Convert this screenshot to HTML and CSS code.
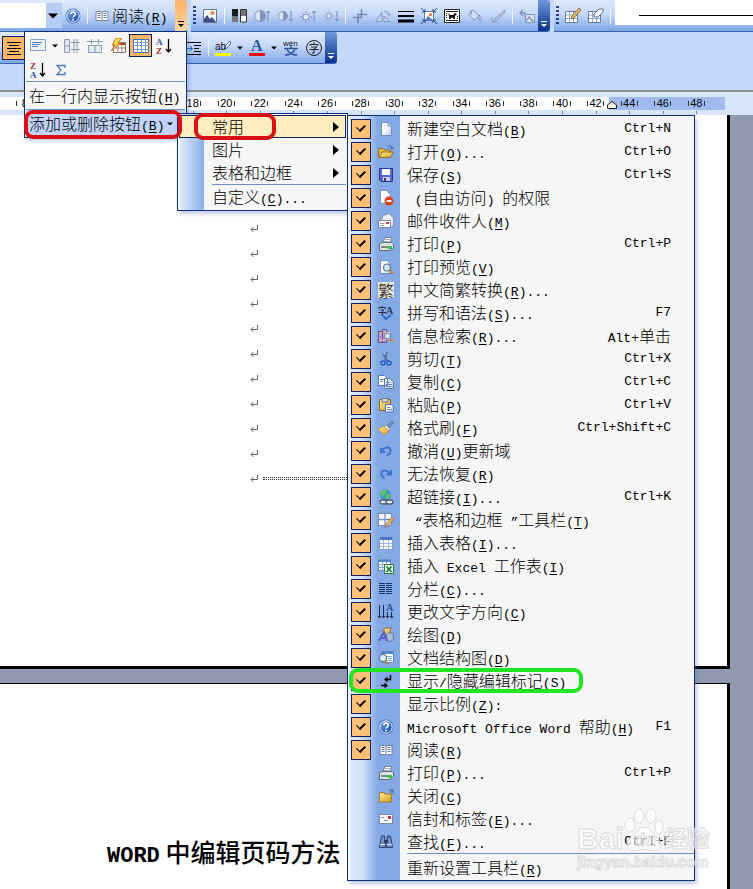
FILE: index.html
```html
<!DOCTYPE html>
<html lang="zh-CN">
<head>
    <meta charset="UTF-8">
    <meta name="viewport" content="width=device-width, initial-scale=1.0">
    <title>WORD 中编辑页码方法</title>
    <link rel="stylesheet" href="styles.css">
</head>
<body>
    <svg class="sprite" aria-hidden="true">
        <defs>
            <linearGradient id="g-blue" x1="0" y1="0" x2="1" y2="1"><stop offset="0" stop-color="#6fa8f0"/><stop offset="1" stop-color="#1444a8"/></linearGradient>
            <linearGradient id="g-page" x1="0" y1="0" x2="1" y2="1"><stop offset="0.4" stop-color="#fff"/><stop offset="1" stop-color="#b5cdf0"/></linearGradient>
            <linearGradient id="g-gold" x1="0" y1="0" x2="1" y2="1"><stop offset="0" stop-color="#fff0a0"/><stop offset="1" stop-color="#d99a20"/></linearGradient>
        </defs>
        <symbol id="i-help" viewBox="0 0 16 16"><circle cx="8" cy="8" r="7.5" fill="#3567bd"/><circle cx="8" cy="8" r="6.2" fill="url(#g-blue)" stroke="#fff"/><path d="M5.8 6.2C5.8 3.4 10.4 3.4 10.4 6.1C10.4 7.8 8.1 7.8 8.1 9.6M8.1 10.8V12.4" fill="none" stroke="#fff" stroke-width="1.6"/></symbol>
        <symbol id="i-book" viewBox="0 0 16 16"><path d="M2 3.5H7L8 4.5L9 3.5H14V12.5H9L8 13.5L7 12.5H2Z" fill="#fff" stroke="#71819f"/><path d="M8 4V13M3.5 5.5H6.5M3.5 7.5H6.5M3.5 9.5H6.5M9.5 5.5H12.5M9.5 7.5H12.5M9.5 9.5H12.5" stroke="#667796"/></symbol>
        <symbol id="i-picture" viewBox="0 0 16 16"><path d="M1.5 1.5H14.5V14.5H1.5Z" fill="#f4f7ff" stroke="#66748f"/><circle cx="10.5" cy="5" r="2" fill="#ee8739"/><path d="M2 11L5 7L8 11L10 9L14 14H2Z" fill="#394f86"/></symbol>
        <symbol id="i-color" viewBox="0 0 16 16"><path d="M1 1H7V14H1Z" fill="#1b1b1b"/><path d="M1 8H7V14H1Z" fill="#777"/><path d="M9.500 1.500H15.500V14H9.500Z" fill="#fff" stroke="#333"/><path d="M10 2H15V8H10Z" fill="#777"/></symbol>
        <symbol id="i-contrast-up" viewBox="0 0 16 16"><circle cx="6" cy="8" r="5.5" fill="#dbe5f6" stroke="#8494b6"/><path d="M6 2.500A5.500 5.500 0 0 1 6 13.500Z" fill="#8494b6"/><path d="M14 13V3M12 5L14 3L16 5" fill="none" stroke="#7488b2"/></symbol>
        <symbol id="i-contrast-down" viewBox="0 0 16 16"><circle cx="6" cy="8" r="4.500" fill="#dbe5f6" stroke="#8494b6"/><path d="M6 3.500A4.500 4.500 0 0 1 6 12.500Z" fill="#8494b6"/><path d="M14 3V13M12 11L14 13L16 11" fill="none" stroke="#7488b2"/></symbol>
        <symbol id="i-bright-up" viewBox="0 0 16 16"><circle cx="6" cy="9" r="3" fill="#e1eafa" stroke="#8494b6"/><path d="M6 3V5M6 13V15M0 9H2M10 9H12M2 5L3.500 6.500M8.500 11.500L10 13M10 5L8.500 6.500M2 13L3.500 11.500" stroke="#8494b6"/><path d="M14 13V3M12 5L14 3L16 5" fill="none" stroke="#7488b2"/></symbol>
        <symbol id="i-bright-down" viewBox="0 0 16 16"><circle cx="6" cy="8" r="2.500" fill="#e1eafa" stroke="#8494b6"/><path d="M6 3V4M6 12V13M1 8H2M10 8H11M3 5H4M8 5H9M3 11H4M8 11H9" stroke="#8494b6"/><path d="M14 3V13M12 11L14 13L16 11" fill="none" stroke="#7488b2"/></symbol>
        <symbol id="i-crop" viewBox="0 0 16 16"><path d="M1 9.500H9.500V1M6 15V6.500H15" fill="none" stroke="#7488b2" stroke-width="1.500"/></symbol>
        <symbol id="i-rotate" viewBox="0 0 16 16"><path d="M1 13.500H7V4.500ZM9 13.500H15L9 8Z" fill="#c9d8f3" stroke="#8196c1"/><path d="M9 3.500C13 3 14 5 14 7M12 5.500L14 7.500L16 5.500" fill="none" stroke="#8196c1"/></symbol>
        <symbol id="i-lines" viewBox="0 0 16 16"><path d="M0 3.500H16" stroke="#000"/><path d="M0 8H16" stroke="#000" stroke-width="2"/><path d="M0 13H16" stroke="#000" stroke-width="3"/></symbol>
        <symbol id="i-compress" viewBox="0 0 16 16"><path d="M3.500 3.500H12.500V12.500H3.500Z" fill="#fff" stroke="#68799b"/><circle cx="9.500" cy="6.500" r="1.500" fill="#e96a2c"/><path d="M4 12L7 8L12 12Z" fill="#587dc0"/><path d="M0 0L4 4M1 4H4V1M16 0L12 4M12 1V4H15M0 16L4 12M1 12H4V15M16 16L12 12M12 15V12H15" fill="none" stroke="#1d4795"/></symbol>
        <symbol id="i-wrap" viewBox="0 0 16 16"><path d="M.5 1.500H15.500V14.500H.5Z" fill="#fff" stroke="#222"/><path d="M2 3.500H14M2 12.500H14M2 5.500H3M2 7.500H3M2 9.500H3M13 8.500H14M13 10.500H14" stroke="#222"/><path d="M4 5L6 7H9L11 5L13 6L11 8V11H10L8 9.500L6 11H5L5 8Z" fill="#111"/></symbol>
        <symbol id="i-fill" viewBox="0 0 16 16"><path d="M1.500 6L6.500 2L12 8L7 12ZM4 2V7M12 7C14 9 15 11 14 13C12 13 12 10 12 8" fill="#d3dff4" stroke="#8295bc"/></symbol>
        <symbol id="i-pen" viewBox="0 0 16 16"><path d="M14.500 2L5 11L3 14L7 12L15 4ZM2 9V14H7" fill="#c3d2ee" stroke="#8295bc"/></symbol>
        <symbol id="i-reset" viewBox="0 0 16 16"><path d="M6.500 6.500H15.500V14.500H6.500Z" fill="#dbe5f6" stroke="#8295bc"/><path d="M7 13L10 9L12 11L14 14M6 9V5H1M4 2L1 5L4 8" fill="none" stroke="#8295bc" stroke-width="1.400"/></symbol>
        <symbol id="i-table" viewBox="0 0 16 16"><path d="M1.500 2.500H14.500V14.500H1.500Z" fill="#fff" stroke="#7f9ccc"/><path d="M2 2H14V5H2Z" fill="#4c79c5"/><path d="M2 8.500H14M2 11.500H14M5.500 5V14M10.500 5V14" stroke="#9bb5df"/></symbol>
        <symbol id="i-table-pen" viewBox="0 0 16 16"><path d="M.5 3.500H12.500V14.500H.5Z" fill="#fff" stroke="#657da6"/><path d="M1 7H12M1 10.500H12M4.500 4V14M8.500 4V14" stroke="#8ea9d6"/><path d="M14 0L16 2L9 10L6 11L7 8Z" fill="#edbf68" stroke="#70532b" stroke-width=".8"/></symbol>
        <symbol id="i-table-erase" viewBox="0 0 16 16"><path d="M.5 3.500H12.500V14.500H.5Z" fill="#fff" stroke="#657da6"/><path d="M1 7H12M1 10.500H12M4.500 4V14M8.500 4V14" stroke="#8ea9d6"/><path d="M11 1H15V4L10 9H6V6Z" fill="#f3f4fb" stroke="#69779a"/></symbol>
        <symbol id="i-center" viewBox="0 0 16 16"><path d="M1 2.500H15M3 5.500H13M1 8.500H15M3 11.500H13M1 14.500H15" stroke="#000"/></symbol>
        <symbol id="i-indent" viewBox="0 0 16 16"><path d="M1 2.500H15M8 5.500H15M8 8.500H13M8 11.500H15M1 14.500H15" stroke="#000"/><path d="M1 8.500H6M4 6L6.500 8.500L4 11" fill="none" stroke="#1c57b5"/></symbol>
        <symbol id="i-circle-char" viewBox="0 0 16 16"><circle cx="8" cy="8" r="7.500" fill="none" stroke="#222"/><path d="M8 2V4M4 6V4.500H12V6M5 7H11L8 9V13H6M3.500 9.500H12.500" fill="none" stroke="#222"/></symbol>
        <symbol id="i-align" viewBox="0 0 16 16"><path d="M.5 1.500H15.500V12.500H.5Z" fill="#edf2fb" stroke="#879fc8"/><path d="M2 4.500H12M2 6.500H10M2 8.500H8" stroke="#5b7fb9"/></symbol>
        <symbol id="i-rows" viewBox="0 0 16 16"><path d="M.5 1.500H5.500V14.500H.5ZM.5 8H5.500M10 1V15M13 1V15M7 4.500H16M7 11.500H16" fill="#e3e8f2" stroke="#8d99ae"/></symbol>
        <symbol id="i-cols" viewBox="0 0 16 16"><path d="M1.500 7.500H14.500V14.500H1.500ZM8 7V15M0 3.500H16M4.500 1V6M11.500 1V6" fill="#e3e8f2" stroke="#8d99ae"/></symbol>
        <symbol id="i-autofmt" viewBox="0 0 16 16"><path d="M3.500 4.500H15.500V14.500H3.500Z" fill="#fff" stroke="#8b7260"/><path d="M4 5H15V7H4Z" fill="#b64936"/><path d="M4 10H15M8 7V14M12 7V14" stroke="#9c887a"/><path d="M6 0H12L8 5H11L1 13L5 7H2Z" fill="#ffd04b" stroke="#b66616" stroke-width=".8"/></symbol>
        <symbol id="i-grid" viewBox="0 0 16 16"><path d="M.5 1.500H15.500V14.500H.5Z" fill="#fff" stroke="#3e69ad"/><path d="M0 4.500H16M0 7.500H16M0 11.500H16M4.500 1V15M8.500 1V15M12.500 1V15" stroke="#7497cd"/></symbol>
        <symbol id="i-sum" viewBox="0 0 16 16"><path d="M12 6V3.500H4L8 8L4 12.500H12V10" fill="none" stroke="#5179b5" stroke-width="1.300"/></symbol>
        <symbol id="i-new" viewBox="0 0 16 16"><path d="M3.500 1.500H10L13.500 5V14.500H3.500Z" fill="url(#g-page)" stroke="#6f8cba"/><path d="M10 1.500V5H13.500" fill="#cbdcf5" stroke="#6f8cba"/></symbol>
        <symbol id="i-open" viewBox="0 0 16 16"><path d="M.5 13.500V4.500H5L6.500 6H12.500V8" fill="#e7b94d" stroke="#976f21"/><path d="M1 13.500L4 8H15.500L12.500 13.500Z" fill="url(#g-gold)" stroke="#976f21"/><path d="M9 3C11 1 13 1 14 4M12 3.500L14 5L15.500 3" fill="none" stroke="#2c63a7"/></symbol>
        <symbol id="i-save" viewBox="0 0 16 16"><path d="M1.500 1.500H14.500V14.500H3L1.500 13Z" fill="#5868ce" stroke="#30358c"/><path d="M4 2H12V8H4Z" fill="#f5f8ff"/><path d="M5 10H12V14H5Z" fill="#cad3ed"/><path d="M6 11H8V14H6Z" fill="#30358c"/></symbol>
        <symbol id="i-rights" viewBox="0 0 16 16"><path d="M2.500 .5H8.500L12.500 4.500V13.500H2.500Z" fill="url(#g-page)" stroke="#7c94ba"/><circle cx="11" cy="11" r="4.500" fill="#d9441e"/><path d="M8.500 11H13.500" stroke="#fff" stroke-width="2"/></symbol>
        <symbol id="i-mail" viewBox="0 0 16 16"><path d="M3.500 6.500L5 2.500L11 .5L15.500 5V13.500H3.500Z" fill="#e9eef8" stroke="#8290aa"/><path d="M.5 7.500H12.500V14.500H.5Z" fill="#fff" stroke="#7788a9"/><path d="M8 9H11V11H8Z" fill="#d73838"/><path d="M2 10.500H6M2 12.500H6" stroke="#899ab8"/></symbol>
        <symbol id="i-print" viewBox="0 0 16 16"><path d="M4.500 7L7 1.500H14L11.500 7" fill="#fff" stroke="#758091"/><path d="M7 3.500H12M6 5.500H11" stroke="#9cacbf"/><path d="M1.500 8L4 6.500H14L15.500 8V12L12 14.500H1.500Z" fill="#dce5e3" stroke="#64716d"/><path d="M3 10H10V12H3Z" fill="#7b898b"/><path d="M10 10H14V13H10Z" fill="#28ca43"/></symbol>
        <symbol id="i-preview" viewBox="0 0 16 16"><path d="M2.500 1.500H9L12.500 5V14.500H2.500Z" fill="url(#g-page)" stroke="#758cb3"/><circle cx="9" cy="8.500" r="3.500" fill="#cce8ff" stroke="#67758e" stroke-width="1.200"/><path d="M11.500 11L15 15" stroke="#bf7d2d" stroke-width="2"/></symbol>
        <symbol id="i-research" viewBox="0 0 16 16"><path d="M.5 3.500H4.500V14.500H.5ZM4.500 1.500H8.500V14.500H4.500Z" fill="#b794d5" stroke="#69549c"/><path d="M1 5H4M5 4H8M1 12H8" stroke="#f0cc70"/><path d="M8.500 3.500H12.500V12H8.500Z" fill="#fff" stroke="#7884a8"/><circle cx="9.500" cy="8" r="3" fill="#d9f0ff" stroke="#69789a"/><path d="M12 11L15 14" stroke="#d28a2b" stroke-width="2"/></symbol>
        <symbol id="i-cut" viewBox="0 0 16 16"><path d="M9 1L7 10M5 3L10 11" stroke="#526a91" stroke-width="1.500"/><circle cx="5" cy="12" r="2" fill="none" stroke="#245cbd" stroke-width="1.500"/><circle cx="11" cy="12" r="2" fill="none" stroke="#245cbd" stroke-width="1.500"/></symbol>
        <symbol id="i-copy" viewBox="0 0 16 16"><path d="M.5 1.500H6.500L9.500 4.500V11.500H.5ZM6.500 4.500H12L15.500 8V14.500H6.500Z" fill="url(#g-page)" stroke="#567ab4"/><path d="M2 5.500H6M2 7.500H5M8 8.500H12M8 10.500H14M8 12.500H13" stroke="#6688bd"/></symbol>
        <symbol id="i-paste" viewBox="0 0 16 16"><path d="M1.500 2.500H12.500V13.500H1.500Z" fill="url(#g-gold)" stroke="#8f691c"/><path d="M4 1.500H10V5H4Z" fill="#d9dce5" stroke="#69708a"/><path d="M7.500 7.500H13L15.500 10V15H7.500Z" fill="url(#g-page)" stroke="#5876a7"/><path d="M9 10.500H12M9 12.500H14" stroke="#6f8abb"/></symbol>
        <symbol id="i-brush" viewBox="0 0 16 16"><path d="M14 1L15.500 3L11 8L9 6Z" fill="#7493bb" stroke="#526681" stroke-width=".7"/><path d="M8 5L12 9L10 11L6 7Z" fill="#eef1f7" stroke="#72829a" stroke-width=".7"/><path d="M6 6L11 11L6 15L0 9Z" fill="url(#g-gold)" stroke="#ad8238" stroke-width=".7"/></symbol>
        <symbol id="i-undo" viewBox="0 0 16 16"><path d="M3 5V9H7M3 8.500C6 4 12 3 12.500 7C13 10 10 12 8.500 13" fill="none" stroke="#3e72d2" stroke-width="2"/></symbol>
        <symbol id="i-redo" viewBox="0 0 16 16"><path d="M13 4V8.500H8.500M13 8C9 4 4 3 3.500 7C3 10 5 11 6.500 12" fill="none" stroke="#3e72d2" stroke-width="2"/></symbol>
        <symbol id="i-link" viewBox="0 0 16 16"><circle cx="7.500" cy="6" r="5.500" fill="#4092c5"/><path d="M3 3C6 0 8 1 9 3L7 6L3 7ZM9 5L13 6L10 10L7 9Z" fill="#60c45d"/><rect x="2" y="11" width="7" height="4" rx="2" fill="#dbe5f6" stroke="#4d596e" stroke-width="1.300"/><rect x="8" y="11" width="7" height="4" rx="2" fill="#dbe5f6" stroke="#4d596e" stroke-width="1.300"/></symbol>
        <symbol id="i-borders" viewBox="0 0 16 16"><path d="M.5 1.500H13.500V13.500H.5Z" fill="#fff" stroke="#6d89b5"/><path d="M0 7.500H14M7 1V14" stroke="#7393c7" stroke-width="1.300"/><path d="M14 5L16 7L10 14L7 15L8 12Z" fill="#efb866" stroke="#80562d" stroke-width=".7"/></symbol>
        <symbol id="i-excel" viewBox="0 0 16 16"><path d="M.5 1.500H12.500V12.500H.5Z" fill="#fff" stroke="#6e8fbd"/><path d="M0 2H13V4H0Z" fill="#5584c8"/><path d="M1 6.500H12M1 9.500H12M4.500 4V12M8.500 4V12" stroke="#8cabd7"/><path d="M6.500 6.500H15.500V15.500H6.500Z" fill="#eaf6e9" stroke="#2b7937"/><path d="M8.500 8.500L13.500 14M13.500 8.500L8.500 14" stroke="#217333" stroke-width="1.700"/></symbol>
        <symbol id="i-columns" viewBox="0 0 16 16"><path d="M1 2.500H7M1 4.500H7M1 6.500H7M1 8.500H7M1 10.500H7M1 12.500H7M8 2.500H14M8 4.500H14M8 6.500H14M8 8.500H14M8 10.500H14M8 12.500H14" stroke="#172f68"/></symbol>
        <symbol id="i-draw" viewBox="0 0 16 16"><path d="M5 2.500L8 1H14L12 3V8H5Z" fill="url(#g-gold)" stroke="#947346"/><path d="M8.500 8C8.500 5 15.500 5 15.500 8V12C15.500 15 8.500 15 8.500 12Z" fill="#a9bbd9" stroke="#647798"/><path d="M1 14L6 5L9 14M3 11H8" fill="none" stroke="#5962ca" stroke-width="2"/></symbol>
        <symbol id="i-docmap" viewBox="0 0 16 16"><path d="M3.500 1.500H15.500V12.500H3.500Z" fill="#fff" stroke="#6083bd"/><path d="M4 2H15V4H4Z" fill="#4f81cd"/><path d="M9 6.500H14M10 8.500H14M9 10.500H14" stroke="#819fc9"/><circle cx="5" cy="8" r="3.500" fill="#dceefa" stroke="#5f7b8c" stroke-width="1.200"/><path d="M7.500 11L10 14.500" stroke="#c3842c" stroke-width="2"/></symbol>
        <symbol id="i-marks" viewBox="0 0 16 16"><path d="M12.500 2V6.500H8M3 12.500H8" fill="none" stroke="#000" stroke-width="1.400"/><path d="M6 6.500L9.500 3.500V9.500ZM10 12.500L6.500 9.500V15.500Z" fill="#000"/></symbol>
        <symbol id="i-close" viewBox="0 0 16 16"><path d="M1.500 4.500H6L7 6H13.500V14H1.500Z" fill="url(#g-gold)" stroke="#a8772a"/><path d="M15 6V2H11M15 2L12 5" fill="none" stroke="#536789"/></symbol>
        <symbol id="i-envelope" viewBox="0 0 16 16"><path d="M1.500 3.500H14.500V12.500H1.500Z" fill="#fff" stroke="#7a8aab"/><path d="M10 5H13V8H10Z" fill="#cf3838"/><path d="M3 6.500H6M6 9.500H10" stroke="#7787a5"/></symbol>
        <symbol id="i-find" viewBox="0 0 16 16"><path d="M3.500 2H6.500L7.500 13.500H1.500ZM9.500 2H12.500L14.500 13.500H8.500Z" fill="#6f91c4" stroke="#2b426e"/><path d="M6 6H10V9H6Z" fill="#2b426e"/><path d="M2 10.500H7M9 10.500H14" stroke="#e3ecfa"/></symbol>
        <symbol id="i-return" viewBox="0 0 8 8"><path d="M7.500 0V4.500H1M3.500 2L1 4.500L3.500 7" fill="none" stroke="#666"/></symbol>
        <symbol id="i-down" viewBox="0 0 8 8"><path d="M0 2H8L4 6Z" fill="#000"/></symbol>
        <symbol id="i-right" viewBox="0 0 8 10"><path d="M1 0V10L7 5Z" fill="#000"/></symbol>
        <symbol id="i-more" viewBox="0 0 8 8"><path d="M1 1.500H7" stroke="currentColor"/><path d="M1 4H7L4 7Z" fill="currentColor"/></symbol>
    </svg>

    <header class="toolbars">
        <div class="bar-row">
            <div class="bar standard">
                <div class="combo">
                    <select aria-label="显示比例"><option></option></select>
                    <svg class="caret"><use href="#i-down"/></svg>
                </div>
                <button class="tool" aria-label="帮助"><svg><use href="#i-help"/></svg></button>
                <span class="sep"></span>
                <button class="tool read"><svg><use href="#i-book"/></svg><span>阅读<span class="en">(<u>R</u>)</span></span></button>
                <button class="more hot" aria-label="工具栏选项"><svg><use href="#i-more"/></svg></button>
            </div>
            <div class="bar pictures">
                <span class="grip"></span>
                <button class="tool" aria-label="插入图片"><svg><use href="#i-picture"/></svg></button>
                <span class="sep"></span>
                <button class="tool" aria-label="颜色"><svg><use href="#i-color"/></svg></button>
                <button class="tool" aria-label="增加对比度"><svg><use href="#i-contrast-up"/></svg></button>
                <button class="tool" aria-label="降低对比度"><svg><use href="#i-contrast-down"/></svg></button>
                <button class="tool" aria-label="增加亮度"><svg><use href="#i-bright-up"/></svg></button>
                <button class="tool" aria-label="降低亮度"><svg><use href="#i-bright-down"/></svg></button>
                <span class="sep"></span>
                <button class="tool" aria-label="裁剪"><svg><use href="#i-crop"/></svg></button>
                <button class="tool" aria-label="向左旋转"><svg><use href="#i-rotate"/></svg></button>
                <button class="tool" aria-label="线型"><svg><use href="#i-lines"/></svg></button>
                <button class="tool" aria-label="压缩图片"><svg><use href="#i-compress"/></svg></button>
                <button class="tool" aria-label="文字环绕"><svg><use href="#i-wrap"/></svg></button>
                <button class="tool" aria-label="设置图片格式"><svg><use href="#i-fill"/></svg></button>
                <button class="tool" aria-label="设置透明色"><svg><use href="#i-pen"/></svg></button>
                <span class="sep"></span>
                <button class="tool" aria-label="重设图片"><svg><use href="#i-reset"/></svg></button>
                <button class="more" aria-label="工具栏选项"><svg><use href="#i-more"/></svg></button>
            </div>
            <div class="bar tables">
                <span class="grip"></span>
                <button class="tool" aria-label="绘制表格"><svg><use href="#i-table-pen"/></svg></button>
                <button class="tool" aria-label="擦除"><svg><use href="#i-table-erase"/></svg></button>
                <span class="sep"></span>
                <div class="line-style">
                    <select aria-label="线型"><option></option></select>
                    <span class="line"></span>
                </div>
            </div>
        </div>
        <div class="bar-row">
            <div class="bar format">
                <button class="tool on" aria-label="居中"><svg><use href="#i-center"/></svg></button>
                <button class="tool indent" aria-label="增加缩进量"><svg><use href="#i-indent"/></svg></button>
                <span class="sep"></span>
                <button class="tool" aria-label="突出显示"><svg viewBox="0 0 16 16"><path d="M0 13H16V16H0Z" fill="#f7f700"/><path d="M15 1L10 6L9 9L12 8L16 3Z" fill="#fff" stroke="#4b679b"/><text x="0" y="10" font-size="10" class="glyph">ab</text></svg></button>
                <button class="drop" aria-label="突出显示颜色"><svg><use href="#i-down"/></svg></button>
                <button class="tool" aria-label="字体颜色"><svg viewBox="0 0 16 16"><path d="M0 13H16V16H0Z" fill="#e01010"/><text x="2" y="11" font-size="16" class="glyph-a">A</text></svg></button>
                <button class="drop" aria-label="选择字体颜色"><svg><use href="#i-down"/></svg></button>
                <button class="tool" aria-label="拼音指南"><svg viewBox="0 0 16 16"><text x="0" y="6" font-size="8" class="glyph">wén</text><path d="M1 8.500H15M8 6V8M4 9C5 13 10 15 14 15M12 9C11 13 6 15 2 15" fill="none" stroke="#3454a0" stroke-width="1.500"/></svg></button>
                <button class="tool" aria-label="带圈字符"><svg><use href="#i-circle-char"/></svg></button>
                <button class="more" aria-label="工具栏选项"><svg><use href="#i-more"/></svg></button>
            </div>
        </div>
    </header>

    <div class="ruler">
        <div class="scale">
            <span>8</span><span>10</span><span>12</span><span>14</span><span>16</span><span>18</span><span>20</span><span>22</span><span>24</span><span>26</span><span>28</span><span>30</span><span>32</span><span>34</span><span>36</span><span>38</span><span>40</span><span>42</span><span>44</span><span>46</span><span>48</span>
        </div>
        <svg class="margin-mark" viewBox="0 0 10 8"><path d="M.5 7.500V4L5 .5L9.500 4V7.500Z" fill="#f3ecdc" stroke="#222"/></svg>
    </div>

    <main class="document">
        <section class="page first">
            <p><svg><use href="#i-return"/></svg></p>
            <p><svg><use href="#i-return"/></svg></p>
            <p><svg><use href="#i-return"/></svg></p>
            <p><svg><use href="#i-return"/></svg></p>
            <p><svg><use href="#i-return"/></svg></p>
            <p><svg><use href="#i-return"/></svg></p>
            <p><svg><use href="#i-return"/></svg></p>
            <p><svg><use href="#i-return"/></svg></p>
            <p><svg><use href="#i-return"/></svg></p>
            <p><svg><use href="#i-return"/></svg></p>
            <p><svg><use href="#i-return"/></svg><span class="break"></span></p>
        </section>
        <section class="page second">
            <h1><span class="word">WORD</span> 中编辑页码方法</h1>
        </section>
    </main>

    <!-- toolbar options -->
    <div class="popup options">
        <div class="extra">
            <button class="tool" aria-label="对齐方式"><svg><use href="#i-align"/></svg></button>
            <button class="drop" aria-label="选择对齐方式"><svg><use href="#i-down"/></svg></button>
            <button class="tool" aria-label="平均分布各行"><svg><use href="#i-rows"/></svg></button>
            <button class="tool" aria-label="平均分布各列"><svg><use href="#i-cols"/></svg></button>
            <button class="tool" aria-label="自动套用格式"><svg><use href="#i-autofmt"/></svg></button>
            <button class="tool on" aria-label="显示虚框"><svg><use href="#i-grid"/></svg></button>
            <button class="tool" aria-label="升序排序"><svg viewBox="0 0 16 16"><text x="0" y="7" font-size="9" fill="#2b549c" class="glyph-s">A</text><text x="0" y="16" font-size="9" fill="#a03030" class="glyph-s">Z</text><path d="M12.500 1V14M10 11L12.500 14L15 11" fill="none" stroke="#000" stroke-width="1.300"/></svg></button>
            <button class="tool" aria-label="降序排序"><svg viewBox="0 0 16 16"><text x="0" y="7" font-size="9" fill="#a03030" class="glyph-s">Z</text><text x="0" y="16" font-size="9" fill="#2b549c" class="glyph-s">A</text><path d="M12.500 1V14M10 11L12.500 14L15 11" fill="none" stroke="#000" stroke-width="1.300"/></svg></button>
            <button class="tool" aria-label="自动求和"><svg><use href="#i-sum"/></svg></button>
        </div>
        <button class="option"><span>在一行内显示按钮<span class="en">(<u>H</u>)</span></span></button>
        <button class="option open"><span>添加或删除按钮<span class="en">(<u>B</u>)</span></span><svg><use href="#i-down"/></svg></button>
    </div>

    <!-- add or remove buttons -->
    <div class="popup submenu">
        <button class="sub hover">常用<svg><use href="#i-right"/></svg></button>
        <button class="sub">图片<svg><use href="#i-right"/></svg></button>
        <button class="sub">表格和边框<svg><use href="#i-right"/></svg></button>
        <hr>
        <button class="sub"><span>自定义<span class="en">(<u>C</u>)...</span></span></button>
    </div>

    <!-- button list -->
    <div class="popup list">
        <label class="item"><input type="checkbox" checked><svg><use href="#i-new"/></svg><span>新建空白文档<span class="en">(<u>B</u>)</span></span><kbd>Ctrl+N</kbd></label>
        <label class="item"><input type="checkbox" checked><svg><use href="#i-open"/></svg><span>打开<span class="en">(<u>O</u>)...</span></span><kbd>Ctrl+O</kbd></label>
        <label class="item"><input type="checkbox" checked><svg><use href="#i-save"/></svg><span>保存<span class="en">(<u>S</u>)</span></span><kbd>Ctrl+S</kbd></label>
        <label class="item"><input type="checkbox" checked><svg><use href="#i-rights"/></svg><span><span class="en"> (</span>自由访问<span class="en">) </span>的权限</span></label>
        <label class="item"><input type="checkbox" checked><svg><use href="#i-mail"/></svg><span>邮件收件人<span class="en">(<u>M</u>)</span></span></label>
        <label class="item"><input type="checkbox" checked><svg><use href="#i-print"/></svg><span>打印<span class="en">(<u>P</u>)</span></span><kbd>Ctrl+P</kbd></label>
        <label class="item"><input type="checkbox" checked><svg><use href="#i-preview"/></svg><span>打印预览<span class="en">(<u>V</u>)</span></span></label>
        <label class="item"><input type="checkbox" checked><span class="char">繁</span><span>中文简繁转换<span class="en">(<u>R</u>)...</span></span></label>
        <label class="item"><input type="checkbox" checked><svg viewBox="0 0 16 16"><text x="8" y="9" font-size="10" fill="#253c67" class="glyph-s">A</text><path d="M4 1V2M1 4V2.500H7.500V4M2.500 5H6L4.500 6.500V10H3M.5 7.500H8" fill="none" stroke="#1c2948"/><path d="M5 11L8 14L13 10" fill="none" stroke="#2869c8" stroke-width="2"/></svg><span>拼写和语法<span class="en">(<u>S</u>)...</span></span><kbd>F7</kbd></label>
        <label class="item"><input type="checkbox" checked><svg><use href="#i-research"/></svg><span>信息检索<span class="en">(<u>R</u>)...</span></span><kbd>Alt+<span class="cn">单击</span></kbd></label>
        <label class="item"><input type="checkbox" checked><svg><use href="#i-cut"/></svg><span>剪切<span class="en">(<u>T</u>)</span></span><kbd>Ctrl+X</kbd></label>
        <label class="item"><input type="checkbox" checked><svg><use href="#i-copy"/></svg><span>复制<span class="en">(<u>C</u>)</span></span><kbd>Ctrl+C</kbd></label>
        <label class="item"><input type="checkbox" checked><svg><use href="#i-paste"/></svg><span>粘贴<span class="en">(<u>P</u>)</span></span><kbd>Ctrl+V</kbd></label>
        <label class="item"><input type="checkbox" checked><svg><use href="#i-brush"/></svg><span>格式刷<span class="en">(<u>F</u>)</span></span><kbd>Ctrl+Shift+C</kbd></label>
        <label class="item"><input type="checkbox" checked><svg><use href="#i-undo"/></svg><span>撤消<span class="en">(<u>U</u>)</span>更新域</span></label>
        <label class="item"><input type="checkbox" checked><svg><use href="#i-redo"/></svg><span>无法恢复<span class="en">(<u>R</u>)</span></span></label>
        <label class="item"><input type="checkbox" checked><svg><use href="#i-link"/></svg><span>超链接<span class="en">(<u>I</u>)...</span></span><kbd>Ctrl+K</kbd></label>
        <label class="item"><input type="checkbox" checked><svg><use href="#i-borders"/></svg><span><span class="en"> “</span>表格和边框<span class="en"> ”</span>工具栏<span class="en">(<u>T</u>)</span></span></label>
        <label class="item"><input type="checkbox" checked><svg><use href="#i-table"/></svg><span>插入表格<span class="en">(<u>I</u>)...</span></span></label>
        <label class="item"><input type="checkbox" checked><svg><use href="#i-excel"/></svg><span>插入<span class="en"> Excel </span>工作表<span class="en">(<u>I</u>)</span></span></label>
        <label class="item"><input type="checkbox" checked><svg><use href="#i-columns"/></svg><span>分栏<span class="en">(<u>C</u>)...</span></span></label>
        <label class="item"><input type="checkbox" checked><svg viewBox="0 0 16 16"><path d="M1.500 1V14M5.500 1V14M9.500 8V14M13.500 8V14M0 12L1.500 14L3 12M4 12L5.500 14L7 12M8 12L9.500 14L11 12M12 12L13.500 14L15 12" fill="none" stroke="#1c2f59"/><text x="8" y="7" font-size="10" fill="#234f9b" class="glyph-s">A</text></svg><span>更改文字方向<span class="en">(<u>C</u>)</span></span></label>
        <label class="item"><input type="checkbox" checked><svg><use href="#i-draw"/></svg><span>绘图<span class="en">(<u>D</u>)</span></span></label>
        <label class="item"><input type="checkbox" checked><svg><use href="#i-docmap"/></svg><span>文档结构图<span class="en">(<u>D</u>)</span></span></label>
        <label class="item"><input type="checkbox" checked><svg><use href="#i-marks"/></svg><span>显示<span class="en">/</span>隐藏编辑标记<span class="en">(<u>S</u>)</span></span></label>
        <label class="item"><input type="checkbox" checked><span></span><span>显示比例<span class="en">(<u>Z</u>):</span></span></label>
        <label class="item"><input type="checkbox" checked><svg><use href="#i-help"/></svg><span><span class="en">Microsoft Office Word </span>帮助<span class="en">(<u>H</u>)</span></span><kbd>F1</kbd></label>
        <label class="item"><input type="checkbox" checked><svg><use href="#i-book"/></svg><span>阅读<span class="en">(<u>R</u>)</span></span></label>
        <button class="item"><span></span><svg><use href="#i-print"/></svg><span>打印<span class="en">(<u>P</u>)...</span></span><kbd>Ctrl+P</kbd></button>
        <button class="item"><span></span><svg><use href="#i-close"/></svg><span>关闭<span class="en">(<u>C</u>)</span></span></button>
        <button class="item"><span></span><svg><use href="#i-envelope"/></svg><span>信封和标签<span class="en">(<u>E</u>)...</span></span></button>
        <button class="item"><span></span><svg><use href="#i-find"/></svg><span>查找<span class="en">(<u>F</u>)...</span></span><kbd>Ctrl+F</kbd></button>
        <hr>
        <button class="item"><span></span><span></span><span>重新设置工具栏<span class="en">(<u>R</u>)</span></span></button>
    </div>

    <div class="ring ring-add"></div>
    <div class="ring ring-common"></div>
    <div class="ring ring-marks"></div>

    <div class="watermark">
        <div class="brand">
            <span class="bai">Bai</span>
            <svg viewBox="0 0 40 44"><g fill="#fff" stroke="#cfcfcf"><ellipse cx="6" cy="17" rx="5" ry="7"/><ellipse cx="15" cy="8" rx="5" ry="7"/><ellipse cx="27" cy="8" rx="5" ry="7"/><ellipse cx="35" cy="19" rx="4" ry="7"/><path d="M20 19C26 19 28 26 34 30C40 36 36 43 29 43C24 43 24 41 20 41C16 41 14 43 10 43C3 43 0 36 6 30C12 26 14 19 20 19Z"/></g><text x="10" y="38" font-size="18" class="du">du</text></svg>
            <span class="exp">经验</span>
        </div>
        <div class="site">jingyan.baidu.com</div>
    </div>
</body>
</html>
```
FILE: styles.css
```css
*{box-sizing:border-box;}
body{margin:0;min-height:100vh;display:flex;flex-direction:column;position:relative;overflow:hidden;background-color:#c3d7f9;color:#000;font-family:"Noto Sans CJK SC",sans-serif;font-size:16px;font-weight:300;line-height:23px;}
button,select,label,input{font:inherit;color:inherit;margin:0;}
button{border:0;padding:0;background:none;}
.sprite{position:absolute;width:0;height:0;}
svg{display:block;width:16px;height:16px;flex:none;}
.en,kbd{font-family:"Liberation Mono",monospace;font-size:13px;line-height:1;white-space:pre;}
.cn{font-family:"Noto Sans CJK SC",sans-serif;font-size:16px;}
.glyph{font-family:"Liberation Sans",sans-serif;fill:#111;}
.glyph-s{font-family:"Liberation Serif",serif;font-weight:bold;}
.glyph-a{font-family:"Liberation Serif",serif;font-weight:bold;fill:#31569c;}
u{text-underline-offset:2px;}

/* toolbars */
.toolbars{height:90px;}
.bar-row{display:flex;height:32px;gap:4px;}
.bar{display:flex;align-items:center;height:32px;background:linear-gradient(#dfeafd,#c5d9f9 45%,#7fa6e6);border-bottom:1px solid #3b62ad;border-radius:0 3px 3px 0;}
.tables{flex:1;border-radius:0;}
.tool{display:flex;align-items:center;justify-content:center;width:23px;height:24px;}
.tool.on{background-color:#ffb668;border:1px solid #13205f;}
.read{width:auto;padding:0 8px 0 4px;gap:2px;white-space:nowrap;}
.sep{width:1px;height:17px;margin:0 2px 0 3px;background-color:#eef4ff;}
.grip{width:3px;height:19px;margin:0 2px 0 2px;background:repeating-linear-gradient(#27418a 0 2px,transparent 2px 4px);}
.more{display:flex;align-items:flex-end;justify-content:center;width:12px;height:31px;padding-bottom:3px;margin-left:auto;background:linear-gradient(#6f97dd,#0b318b);border-radius:0 3px 3px 0;color:#fff;}
.more.hot{background:linear-gradient(#ffb067,#ffd6a0);color:#000;}
.more svg{width:8px;height:8px;}
.drop{width:11px;height:24px;display:flex;align-items:center;justify-content:center;}
.drop svg,.option svg{width:6px;height:6px;}
.combo,.line-style{position:relative;}
.combo select{display:block;width:62px;height:25px;appearance:none;border:0;border-radius:0;background:linear-gradient(to right,#fff 46px,#b7cdf5 46px);}
.caret{position:absolute;right:4px;top:8px;width:10px;height:10px;}
.line-style{flex:1;align-self:flex-start;margin-left:2px;}
.line-style select{display:block;width:100%;height:25px;appearance:none;border:0;border-radius:0;background-color:#fff;}
.line{position:absolute;left:24px;right:0;top:15px;height:1px;background-color:#000;}
.standard{width:187px;}
.pictures{width:359px;}
.format{width:337px;padding-left:2px;}
.indent{margin-left:157px;}

/* ruler */
.ruler{position:relative;height:25px;padding:5px 28px 0 0;background-color:#d8e6fb;border-top:2px solid #8c9089;}
.scale{display:flex;height:13px;padding:0 12px 0 8px;background:linear-gradient(to right,#fff 84%,#a0bbf0 84%);}
.scale span{position:relative;flex:1 1 0;text-align:center;font-family:"Liberation Sans",sans-serif;font-size:11px;font-weight:400;line-height:13px;background:linear-gradient(#333,#333) 25% 50%/1px 5px no-repeat,linear-gradient(#333,#333) 75% 50%/1px 5px no-repeat;}
.scale span::after{content:"";position:absolute;left:50%;top:14px;height:3px;border-left:1px solid #7485a5;}
.margin-mark{position:absolute;left:607px;top:9px;width:10px;height:8px;}

/* pages */
.document{flex:1;display:flex;flex-direction:column;gap:14px;padding-right:23px;background-color:#9199ae;}
.page{background-color:#fff;border-right:3px solid #000;}
.first{height:554px;padding:101px 114px 0 250px;border-bottom:3px solid #000;}
.first p{display:flex;align-items:center;gap:5px;height:25px;margin:0;}
.first svg{width:8px;height:8px;}
.break{flex:1;height:3px;border-top:1px dotted #333;border-bottom:1px dotted #333;}
.second{flex:1;padding:150px 0 0 107px;border-top:1px solid #000;}
h1{margin:0;font-size:25px;line-height:34px;font-weight:500;}
.word{font-family:"Liberation Mono",monospace;font-size:22px;font-weight:bold;}

/* menus */
.popup{position:absolute;background-color:#f6f6f6;border:1px solid #0f2f78;box-shadow:2px 3px 4px rgba(80,110,190,0.35);}
hr{height:1px;margin:0;border:0;background-color:#6b8fc6;}
.options{left:24px;top:31px;width:163px;padding:2px 1px 0;}
.extra{display:flex;flex-wrap:wrap;height:47px;}
.extra .tool{height:23px;}
.option{display:flex;align-items:center;gap:3px;width:100%;height:28px;padding-left:3px;border-top:1px solid #6b8fc6;white-space:nowrap;}
.option.open{background-color:#c1d4f8;}
.submenu{left:177px;top:113px;width:171px;padding:1px 1px 2px;background:linear-gradient(to right,#e0ebfd,#8baeea) 2px 0/24px 100% no-repeat #f6f6f6;}
.sub{display:flex;align-items:center;width:100%;height:23px;padding:0 6px 0 33px;}
.sub svg{width:8px;height:10px;margin-left:auto;}
.sub.hover{background-color:#ffedc0;border:1px solid #10205f;padding:0 5px 0 32px;}
.submenu hr{margin:0 0 0 33px;}
.list{left:347px;top:115px;width:348px;padding:1px 0 1px;background:linear-gradient(to right,#e0ecff,#cfe0fb 25%,#84a9e4 55%,#84a9e4) 2px 0/50px 100% no-repeat #f6f6f6;}
.item{display:grid;grid-template-columns:27px 29px 1fr auto;grid-template-rows:23px;align-items:center;width:100%;height:23px;padding:0 23px 0 3px;line-height:21px;text-align:left;white-space:nowrap;}
.item input{appearance:none;display:flex;align-items:center;justify-content:center;width:20px;height:20px;background-color:#ffc177;border:1px solid #10205f;}
.item input:checked::before{content:"";width:7px;height:4px;margin-top:-3px;border-left:1px solid #000;border-bottom:2px solid #000;transform:rotate(-45deg);}
.char{width:16px;height:16px;font-size:16px;line-height:16px;background-color:#e9e6d8;}
.list hr{margin:0 0 2px 59px;}

/* highlight rings */
.ring{position:absolute;border:4px solid #d91016;border-radius:9px;pointer-events:none;}
.ring-add{left:24px;top:110px;width:158px;height:29px;}
.ring-common{left:194px;top:113px;width:82px;height:27px;}
.ring-marks{left:349px;top:668px;width:234px;height:25px;border-color:#20e520;}

/* watermark */
.watermark{position:absolute;left:577px;top:808px;opacity:0.7;font-family:"Liberation Sans","Noto Sans CJK SC",sans-serif;font-weight:bold;color:#fff;-webkit-text-stroke:1px #cfcfcf;pointer-events:none;}
.brand{display:flex;align-items:flex-end;height:44px;}
.brand svg{width:40px;height:44px;}
.bai{font-size:30px;line-height:26px;}
.exp{font-size:23px;line-height:26px;}
.du{font-family:"Liberation Sans",sans-serif;fill:#fff;stroke:#cfcfcf;}
.site{font-size:15px;line-height:20px;}
```
